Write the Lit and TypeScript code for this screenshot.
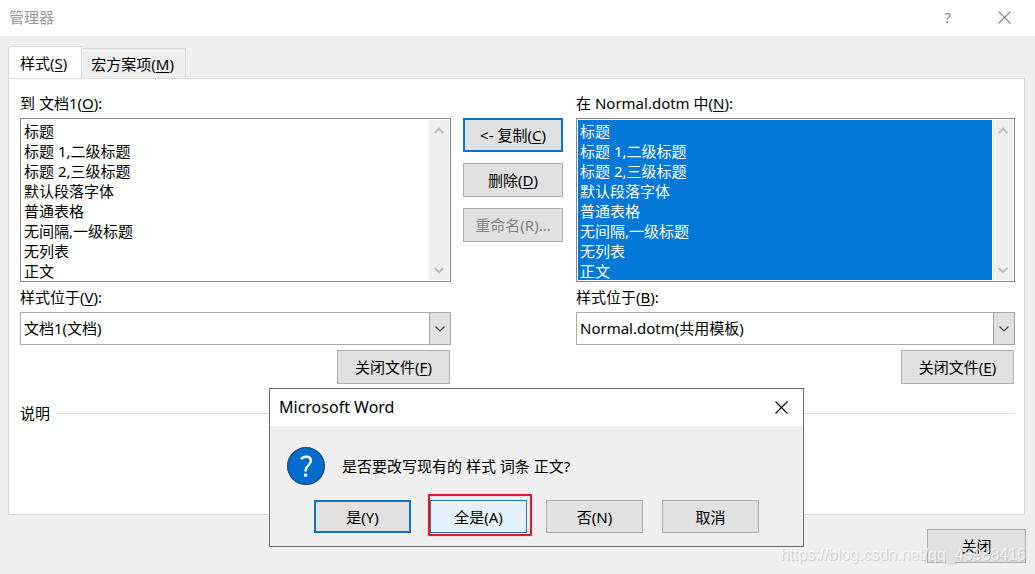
import { LitElement, html, css, svg } from "lit";
import { customElement, property } from "lit/decorators.js";

const STYLES = [
  "标题",
  "标题 1,二级标题",
  "标题 2,三级标题",
  "默认段落字体",
  "普通表格",
  "无间隔,一级标题",
  "无列表",
  "正文",
];

const shared = css`
  * {
    box-sizing: border-box;
  }
  button,
  select {
    font: inherit;
    color: inherit;
    margin: 0;
    border-radius: 0;
  }
  u {
    text-decoration: underline;
    text-decoration-thickness: 1px;
    text-underline-offset: 2px;
    text-decoration-skip-ink: none;
  }
  .btn {
    height: 34px;
    padding: 0;
    background: #e1e1e1;
    border: 1px solid #adadad;
    color: #000;
    text-align: center;
    white-space: nowrap;
  }
  .btn.primary {
    border: 2px solid #0f73c5;
  }
  .btn:disabled {
    color: #838383;
  }
  .plain {
    display: flex;
    align-items: center;
    justify-content: center;
    padding: 0;
    border: 0;
    background: none;
  }
`;

const cross = svg`<path d="M0.5 0.5 L12.5 12.5 M12.5 0.5 L0.5 12.5" fill="none" stroke="currentColor" stroke-width="1.1"/>`;

/** One side of the organizer: style list, file chooser and close button. */
@customElement("style-column")
class StyleColumn extends LitElement {
  @property() heading = "";
  @property() headingKey = "";
  @property() fileKey = "";
  @property() file = "";
  @property() closeKey = "";
  @property({ type: Boolean }) allSelected = false;

  static styles = [
    shared,
    css`
      :host {
        display: flex;
        flex-direction: column;
        min-width: 0;
      }
      .label {
        display: block;
        height: 20px;
        line-height: 20px;
        white-space: nowrap;
      }
      .listbox {
        display: flex;
        margin-top: 5px;
        padding: 1px;
        border: 1px solid #828790;
        background: #fff;
      }
      .list {
        appearance: none;
        flex: 1;
        min-width: 0;
        height: 160px;
        padding: 0;
        border: 0;
        outline: 0;
        overflow: hidden;
        background: #fff;
      }
      .list option {
        height: 20px;
        min-height: 20px;
        padding: 0 2px;
        line-height: 18px;
        color: #000;
      }
      .list option:checked {
        color: #fff;
        -webkit-text-fill-color: #fff;
        background: #0078d7 linear-gradient(#0078d7, #0078d7);
      }
      .scroll {
        display: flex;
        flex-direction: column;
        justify-content: space-between;
        width: 20px;
        margin-left: 1px;
        padding-right: 1px;
        background: #efefef;
      }
      .scroll .plain {
        height: 20px;
        color: #bdbdbd;
      }
      .file-label {
        margin-top: 5px;
      }
      .combo {
        display: grid;
        grid-template-columns: 1fr 22px;
        margin-top: 5px;
        height: 33px;
      }
      .combo select {
        grid-area: 1 / 1 / 2 / 3;
        appearance: none;
        min-width: 0;
        padding: 0 26px 2px 3px;
        border: 1px solid #adadad;
        background: #fff;
        color: #000;
      }
      .arrow {
        grid-area: 1 / 2 / 2 / 3;
        display: flex;
        align-items: center;
        justify-content: center;
        border: 1px solid #a6a6a6;
        background: #e1e1e1;
        color: #444;
        pointer-events: none;
      }
      .close {
        align-self: flex-end;
        width: 113px;
        margin: 5px 1px 0 0;
      }
    `,
  ];

  render() {
    return html`
      <label class="label" for="list">${this.heading}(<u>${this.headingKey}</u>):</label>
      <div class="listbox">
        <select class="list" id="list" multiple size="8">
          ${STYLES.map((s) => html`<option ?selected=${this.allSelected}>${s}</option>`)}
        </select>
        <div class="scroll">
          <button class="plain" aria-label="向上滚动">
            <svg width="10" height="7" viewBox="0 0 10 7"><path d="M0.7 6 L5 1.7 L9.3 6" fill="none" stroke="currentColor" stroke-width="2" /></svg>
          </button>
          <button class="plain" aria-label="向下滚动">
            <svg width="10" height="7" viewBox="0 0 10 7"><path d="M0.7 1 L5 5.3 L9.3 1" fill="none" stroke="currentColor" stroke-width="2" /></svg>
          </button>
        </div>
      </div>
      <label class="label file-label" for="file">样式位于(<u>${this.fileKey}</u>):</label>
      <div class="combo">
        <select id="file"><option>${this.file}</option></select>
        <span class="arrow">
          <svg width="10" height="6" viewBox="0 0 10 6"><path d="M0.5 0.5 L5 5 L9.5 0.5" fill="none" stroke="currentColor" stroke-width="1.2" /></svg>
        </span>
      </div>
      <button class="btn close">关闭文件(<u>${this.closeKey}</u>)</button>
    `;
  }
}

/** Confirmation window floating over the organizer. */
@customElement("confirm-dialog")
class ConfirmDialog extends LitElement {
  static styles = [
    shared,
    css`
      :host {
        display: block;
        width: 535px;
        border: 1px solid #6b6b6f;
        background: #efefef;
        color: #000;
      }
      .title {
        display: flex;
        align-items: center;
        justify-content: space-between;
        height: 37px;
        padding: 0 15px 1px 9px;
        background: #fff;
        font-size: 16px;
      }
      .message {
        display: flex;
        align-items: center;
        gap: 17px;
        padding: 21px 17px 0;
      }
      .message p {
        margin: 0;
        line-height: 20px;
      }
      .icon {
        display: block;
      }
      .actions {
        display: flex;
        gap: 19px;
        padding: 15px 0 13px 44px;
      }
      .actions .btn {
        width: 97px;
        height: 33px;
      }
      .actions .hot {
        border-color: #2a74b0;
        background: #e5f1fb;
      }
      .spot {
        position: relative;
        display: flex;
      }
      .spot::after {
        content: "";
        position: absolute;
        inset: -6px -5px -3px -2px;
        border: 2px solid #dc1f26;
        box-shadow: 0 0 1px #e8585c, inset 0 0 1px #e8585c;
        border-radius: 1px;
        pointer-events: none;
      }
    `,
  ];

  render() {
    return html`
      <div class="title">
        <span>Microsoft Word</span>
        <button class="plain" aria-label="关闭">
          <svg width="13" height="13" viewBox="0 0 13 13">${cross}</svg>
        </button>
      </div>
      <div class="message">
        <svg class="icon" width="38" height="38" viewBox="0 0 38 38" aria-hidden="true">
          <circle cx="19" cy="19" r="18.4" fill="#006ccb" stroke="#17497c" stroke-width="1.2" />
          <path d="M14 12.3 C15.2 10.6 17 9.7 19.2 9.7 C22 9.7 23.9 11.3 23.9 13.8 C23.9 18 18.6 18.6 18.6 23.2 V24.4" fill="none" stroke="#fff" stroke-width="2.4" />
          <rect x="17" y="26.6" width="3.2" height="3.2" rx="1" fill="#fff" />
        </svg>
        <p>是否要改写现有的 样式 词条 正文?</p>
      </div>
      <div class="actions">
        <button class="btn primary">是(Y)</button>
        <span class="spot"><button class="btn hot">全是(A)</button></span>
        <button class="btn">否(N)</button>
        <button class="btn">取消</button>
      </div>
    `;
  }
}

@customElement("app-root")
class AppRoot extends LitElement {
  static styles = [
    shared,
    css`
      :host {
        position: relative;
        display: flex;
        flex-direction: column;
        min-height: 100vh;
        box-sizing: border-box;
        background: #efefef;
        color: #000;
        font: 15px/20px "Noto Sans", "Noto Sans CJK SC", sans-serif;
      }
      .titlebar {
        display: flex;
        align-items: center;
        height: 36px;
        padding: 0 24px 2px 9px;
        background: #fff;
        color: #999;
      }
      .titlebar span {
        flex: 1;
      }
      .titlebar .plain {
        color: #888;
      }
      .help {
        margin-right: 47px;
      }
      .main {
        display: flex;
        flex-direction: column;
        flex: 1;
        padding: 10px 10px 0 8px;
      }
      .tabs {
        display: flex;
        align-items: flex-end;
        height: 33px;
        margin-bottom: -1px;
      }
      .tab {
        height: 31px;
        padding: 0 11px 0 9px;
        border: 1px solid #dadada;
        border-left: 0;
        background: #efefef;
        white-space: nowrap;
      }
      .tab.active {
        height: 33px;
        padding: 0 14px 0 11px;
        border-left: 1px solid #dadada;
        border-bottom-color: #fff;
        background: #fff;
      }
      .panel {
        flex: 1;
        padding: 14px 9px 0 11px;
        border: 1px solid #dadada;
        background: #fff;
      }
      .columns {
        display: grid;
        grid-template-columns: 431fr 101px 439fr;
        column-gap: 12px;
      }
      .transfer {
        display: flex;
        flex-direction: column;
        gap: 11px;
        padding: 25px 1px 0 0;
      }
      .notes {
        display: flex;
        align-items: center;
        gap: 6px;
        margin-top: 19px;
      }
      .notes::after {
        content: "";
        flex: 1;
        height: 1px;
        background: #dadada;
      }
      .footer {
        display: flex;
        justify-content: flex-end;
        padding: 14px 9px 11px;
      }
      .footer .btn {
        width: 99px;
      }
      .dialog {
        position: absolute;
        left: 269px;
        top: 388px;
      }
      .watermark {
        position: absolute;
        right: 9px;
        bottom: 9px;
        color: rgba(255, 255, 255, 0.7);
        font: 16px/20px "Liberation Sans", sans-serif;
        text-shadow: 1px 1px 1px rgba(120, 120, 120, 0.3);
        pointer-events: none;
      }
    `,
  ];

  render() {
    return html`
      <header class="titlebar">
        <span>管理器</span>
        <button class="plain help" aria-label="帮助">?</button>
        <button class="plain" aria-label="关闭">
          <svg width="13" height="13" viewBox="0 0 13 13">${cross}</svg>
        </button>
      </header>
      <main class="main">
        <div class="tabs" role="tablist">
          <button class="tab active" role="tab" aria-selected="true">样式(<u>S</u>)</button>
          <button class="tab" role="tab" aria-selected="false">宏方案项(<u>M</u>)</button>
        </div>
        <section class="panel" role="tabpanel">
          <div class="columns">
            <style-column heading="到 文档1" headingKey="O" fileKey="V" file="文档1(文档)" closeKey="F"></style-column>
            <div class="transfer">
              <button class="btn primary">&lt;- 复制(<u>C</u>)</button>
              <button class="btn">删除(<u>D</u>)</button>
              <button class="btn" disabled>重命名(R)...</button>
            </div>
            <style-column heading="在 Normal.dotm 中" headingKey="N" fileKey="B" file="Normal.dotm(共用模板)" closeKey="E" allSelected></style-column>
          </div>
          <div class="notes">说明</div>
        </section>
      </main>
      <footer class="footer"><button class="btn">关闭</button></footer>
      <confirm-dialog class="dialog" role="dialog" aria-label="Microsoft Word"></confirm-dialog>
      <div class="watermark">https://blog.csdn.net/qq_45988416</div>
    `;
  }
}
